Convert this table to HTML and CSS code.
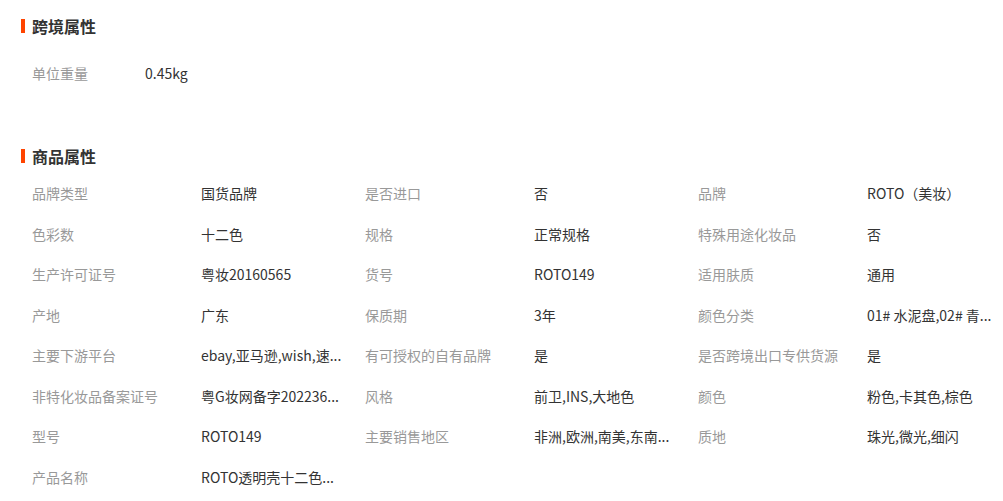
FILE: index.html
```html
<!DOCTYPE html>
<html lang="zh-CN">
<head>
  <meta charset="UTF-8">
  <title>商品属性</title>
  <link rel="stylesheet" href="styles.css">
</head>
<body>

<div class="attr-block first">
  <h2 class="attr-title">跨境属性</h2>
  <div class="cross-row">
    <span class="attr-name narrow">单位重量</span>
    <span class="attr-value">0.45kg</span>
  </div>
</div>

<div class="attr-block second">
  <h2 class="attr-title">商品属性</h2>
  <ul class="attr-list">
    <li><span class="attr-name">品牌类型</span><span class="attr-value">国货品牌</span></li>
    <li><span class="attr-name">是否进口</span><span class="attr-value">否</span></li>
    <li><span class="attr-name">品牌</span><span class="attr-value">ROTO（美妆）</span></li>
    <li><span class="attr-name">色彩数</span><span class="attr-value">十二色</span></li>
    <li><span class="attr-name">规格</span><span class="attr-value">正常规格</span></li>
    <li><span class="attr-name">特殊用途化妆品</span><span class="attr-value">否</span></li>
    <li><span class="attr-name">生产许可证号</span><span class="attr-value">粤妆20160565</span></li>
    <li><span class="attr-name">货号</span><span class="attr-value">ROTO149</span></li>
    <li><span class="attr-name">适用肤质</span><span class="attr-value">通用</span></li>
    <li><span class="attr-name">产地</span><span class="attr-value">广东</span></li>
    <li><span class="attr-name">保质期</span><span class="attr-value">3年</span></li>
    <li><span class="attr-name">颜色分类</span><span class="attr-value" title="01# 水泥盘,02# 青柠盘,03# 草莓盘">01# 水泥盘,02# 青...</span></li>
    <li><span class="attr-name">主要下游平台</span><span class="attr-value" title="ebay,亚马逊,wish,速卖通,独立站">ebay,亚马逊,wish,速...</span></li>
    <li><span class="attr-name">有可授权的自有品牌</span><span class="attr-value">是</span></li>
    <li><span class="attr-name">是否跨境出口专供货源</span><span class="attr-value">是</span></li>
    <li><span class="attr-name">非特化妆品备案证号</span><span class="attr-value" title="粤G妆网备字2022360001">粤G妆网备字202236...</span></li>
    <li><span class="attr-name">风格</span><span class="attr-value">前卫,INS,大地色</span></li>
    <li><span class="attr-name">颜色</span><span class="attr-value">粉色,卡其色,棕色</span></li>
    <li><span class="attr-name">型号</span><span class="attr-value">ROTO149</span></li>
    <li><span class="attr-name">主要销售地区</span><span class="attr-value" title="非洲,欧洲,南美,东南亚,北美">非洲,欧洲,南美,东南...</span></li>
    <li><span class="attr-name">质地</span><span class="attr-value">珠光,微光,细闪</span></li>
    <li><span class="attr-name">产品名称</span><span class="attr-value" title="ROTO透明壳十二色眼影盘">ROTO透明壳十二色...</span></li>
  </ul>
</div>

</body>
</html>
```

FILE: styles.css
```css
body {
  margin: 0;
  font-family: "Noto Sans CJK SC", "Open Sans", sans-serif;
  font-size: 14px;
  color: #333;
  background: #fff;
}
.attr-block {
  padding-left: 21px;
}
.attr-block.first {
  padding-top: 16px;
}
.attr-block.second {
  padding-top: 53px;
}
.attr-title {
  display: flex;
  align-items: center;
  gap: 7px;
  margin: 0;
  height: 20px;
  font-size: 16px;
  font-weight: bold;
  line-height: 20px;
  color: #333;
}
.attr-title::before {
  content: "";
  width: 4px;
  height: 14px;
  background: #ff4400;
}
.cross-row {
  display: flex;
  margin-top: 17px;
  padding-left: 11px;
  line-height: 40px;
}
.attr-list {
  display: grid;
  grid-template-columns: repeat(3, 333px);
  grid-auto-rows: 40.5px;
  margin: 7px 0 0;
  padding: 0 0 0 11px;
  list-style: none;
}
.attr-list li {
  display: flex;
  align-items: center;
}
.attr-name {
  width: 169px;
  flex-shrink: 0;
  color: #999;
  white-space: nowrap;
}
.attr-name.narrow {
  width: 113px;
}
.attr-value {
  color: #333;
  white-space: nowrap;
}
```
